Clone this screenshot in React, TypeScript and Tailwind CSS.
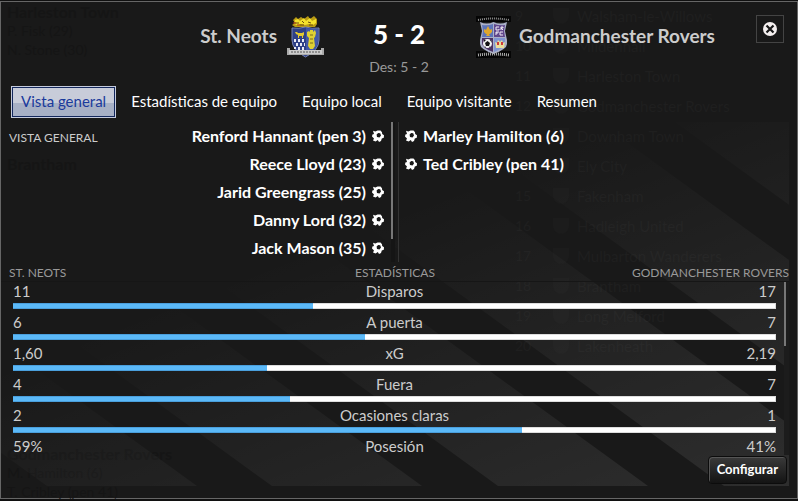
import React from 'react';
import clsx from 'clsx';

interface Goal {
  player: string;
  minute: string;
}

interface Stat {
  label: string;
  home: string;
  away: string;
  share: number;
}

const tabs = ['Vista general', 'Estadísticas de equipo', 'Equipo local', 'Equipo visitante', 'Resumen'];

const homeGoals: Goal[] = [
  { player: 'Renford Hannant', minute: 'pen 3' },
  { player: 'Reece Lloyd', minute: '23' },
  { player: 'Jarid Greengrass', minute: '25' },
  { player: 'Danny Lord', minute: '32' },
  { player: 'Jack Mason', minute: '35' },
];

const awayGoals: Goal[] = [
  { player: 'Marley Hamilton', minute: '6' },
  { player: 'Ted Cribley', minute: 'pen 41' },
];

const stats: Stat[] = [
  { label: 'Disparos', home: '11', away: '17', share: 39.3 },
  { label: 'A puerta', home: '6', away: '7', share: 46.1 },
  { label: 'xG', home: '1,60', away: '2,19', share: 33.3 },
  { label: 'Fuera', home: '4', away: '7', share: 36.3 },
  { label: 'Ocasiones claras', home: '2', away: '1', share: 66.7 },
];

const standings = [
  { pos: '9', team: 'Walsham-le-Willows' },
  { pos: '10', team: 'Mildenhall' },
  { pos: '11', team: 'Harleston Town' },
  { pos: '12', team: 'Godmanchester Rovers' },
  { pos: '', team: 'Downham Town' },
  { pos: '', team: 'Ely City' },
  { pos: '15', team: 'Fakenham' },
  { pos: '16', team: 'Hadleigh United' },
  { pos: '17', team: 'Mulbarton Wanderers' },
  { pos: '18', team: 'Brantham' },
  { pos: '19', team: 'Long Melford' },
  { pos: '20', team: 'Lakenheath' },
];

const BallIcon = () => (
  <svg viewBox="0 0 12 12" className="h-3 w-3 shrink-0" aria-hidden="true">
    <path
      fill="#fff"
      fillRule="evenodd"
      d="M1 .8 3.400 1.400 5.500.4 8.500.6 10 2.200 10.200 4 12 5.200 11.800 7.800 9.800 8.400 9 11 7 12 5.800 10 3.600 11.600 1 10.600 2 8.400 0 6.600.4 4.400 2 4ZM6.200 3 4.600 4.600 5 7 7.500 7.500 9 5.500 8.200 3.300Z"
    />
  </svg>
);

const HomeCrest = () => (
  <svg viewBox="0 0 37 42" className="h-[42px] w-[37px] shrink-0" role="img" aria-label="St. Neots">
    <path fill="#b99b14" d="M6 4 9 1l2 2 3-2 3 2 4-3 2 3 4-3 3 3v5l-2 3H8L5 9l3-2Z" />
    <path fill="#f4e22c" d="M8 4l3-1 2 2 4-3 2 3 4-3 2 3 4-2v4l-3 2-4-1-4 1-4-1-4 1-3-1Z" />
    <path stroke="#6d4d0d" strokeWidth="1" fill="none" d="M7 7h5m3-2 2 2m4-1 3 1m-11 2h4m5 0h4" />
    <path stroke="#b03a1c" strokeWidth="1" d="M6 7h3m1 2h3" />
    <path fill="#2f4187" stroke="#7784b4" strokeWidth="1" d="M5 12q7 1 13.500-1Q25 13 32 12v12q0 10-13.500 17Q5 34 5 24Z" />
    <path fill="#4258a8" d="M19 12q6 1 12 1v12q0 8-12 14Z" />
    <path fill="#e3c930" d="M8 16h2l1 1h4l2-1v3l-1 1v2h-1v-2h-3v2h-1v-3L9 18Z" />
    <g fill="#e9ebf5">
      <path d="M7 23h2v3H7zM11 23h2v3h-2zM15 23h2v3h-2zM9 27h2v3H9zM13 27h2v3h-2zM7 31h2v2H7zM11 31h2v3h-2zM15 31h2v3h-2zM17 27h1v3h-1z" />
    </g>
    <path fill="#dfd033" d="M23 14h3v2l2-2 1 3-1 4-1 1 1 8-2 3h-3l-2-3 1-8-2-2v-4l2-1 1 1Z" />
    <path stroke="#7b6a1c" strokeWidth="1" d="M23 19h3m-3 4h3m-3 4h3" />
    <path fill="#aaa" d="M0 32h3v2h31v-2h3v7H0Z" />
    <path fill="#ccc" d="M2 34h33v4H2z" />
    <path stroke="#555" strokeWidth="1" strokeDasharray="2 1" d="M4 36h29" />
  </svg>
);

const AwayCrest = () => (
  <svg viewBox="0 0 35 42" className="h-[42px] w-[35px] shrink-0" role="img" aria-label="Godmanchester Rovers">
    <path fill="#050505" d="M0 0h35v6H0zM0 35h35v7H0z" />
    <path stroke="#8f8f8f" strokeWidth="2" strokeDasharray="1 1" fill="none" d="M2 4q15-3 31 0" />
    <path fill="#aab0c8" d="M4 6q7 3 13.500 0Q24 9 31 6l-2 9 2 9v4q0 5-13.500 10Q4 33 4 28v-4l2-9Z" />
    <path fill="#5d74b8" d="M6 9q6 1 11-1v13H6l1-6Z" />
    <path fill="#60478c" d="M18 8q6 2 11 1l-1 6 1 6H18Z" />
    <path fill="#4b3263" d="M6 22h11v14q-11-4-11-9Z" />
    <path fill="#7f95d2" d="M18 22h11v5q0 5-11 9Z" />
    <path fill="#e0a72c" d="m12 10 2 4 2-1v3l-2 2h-1l1 2h-4l1-2h-1l-2-2v-3l2 1Z" />
    <path stroke="#f1eef7" strokeWidth="1" fill="none" d="M23 11h-3v3h3v-1m2 1v-3h2v1h-2l2 2M20 19v-3h3m-3 1h2m5-1h-3v3h3" />
    <circle cx="11.500" cy="27.500" r="4.500" fill="#f3f3f3" />
    <path fill="#111" d="m11.500 25 2.500 2-1 3h-3l-1-3ZM8 24h2l-2 2Zm6 0h1l1 3Zm-6 6 2 1v1Zm7 0-2 2v-1Z" />
    <path fill="#eadf9c" d="m19 26 2 1 1-3 2 2 2-2 1 3 2-1-1 6h-8Z" />
    <path fill="#cf3939" d="M21 26h2v3h-2zM25 26h2v3h-2z" />
    <path stroke="#b0b0b0" strokeWidth="3" strokeDasharray="1 1" fill="none" d="M2 39q15-2 31 0" />
  </svg>
);

// Page left open underneath the translucent panel
const Backdrop = () => (
  <div className="pointer-events-none absolute inset-0 select-none" aria-hidden="true">
    <div className="flex flex-col pl-1.5 text-sm leading-[19px] text-[#151515]">
      <div className="h-[152px]">
        <p className="text-base leading-[19px] font-bold">Harleston Town</p>
        <p>P. Fisk (29)</p>
        <p>N. Stone (30)</p>
      </div>
      <div className="h-[290px]">
        <p className="text-base leading-[19px] font-bold">Brantham</p>
      </div>
      <div>
        <p className="text-base leading-[19px] font-bold">Godmanchester Rovers</p>
        <p>M. Hamilton (6)</p>
        <p>T. Cribley (pen 41)</p>
      </div>
    </div>
    <ul className="absolute top-0 left-[514px] -mt-px text-[15px] text-[#1f1f1f]">
      {standings.map(({ pos, team }) => (
        <li key={team} className="flex h-[30px] items-center">
          <span className="w-[38px] text-sm">{pos}</span>
          <span className="mr-2 h-4 w-4 rounded-b-full bg-[#1c1c1c]" />
          {team}
        </li>
      ))}
    </ul>
  </div>
);

const Stripes = () => (
  <svg
    viewBox="0 0 788 364"
    preserveAspectRatio="xMaxYMax slice"
    className="pointer-events-none absolute inset-0 h-full w-full"
    aria-hidden="true"
  >
    <defs>
      <linearGradient id="stripe" gradientUnits="userSpaceOnUse" x1="640" y1="-9" x2="788" y2="364">
        <stop offset="0" stopColor="#fff" stopOpacity="0" />
        <stop offset="1" stopColor="#fff" stopOpacity="0.09" />
      </linearGradient>
    </defs>
    <g fill="url(#stripe)">
      <path d="M-456 0H-306L196 364H46Z" />
      <path d="M-230 0H-80L421 364H271Z" />
      <path d="M-4 0H146L647 364H497Z" />
      <path d="M222 0H372L873 364H723Z" />
      <path d="M448 0H598L1099 364H949Z" />
      <path d="M674 0H824L1325 364H1175Z" />
    </g>
  </svg>
);

const GoalList: React.FC<{ goals: Goal[]; side: 'home' | 'away' }> = ({ goals, side }) => (
  <ul className="text-base font-bold text-white">
    {goals.map(({ player, minute }) => (
      <li
        key={player}
        className={clsx('flex h-7 items-center gap-1.5', side === 'home' && 'flex-row-reverse')}
      >
        <BallIcon />
        <span>{`${player} (${minute})`}</span>
      </li>
    ))}
  </ul>
);

const StatLabels: React.FC<Omit<Stat, 'share'>> = ({ label, home, away }) => (
  <div className="grid grid-cols-[1fr_auto_1fr] text-[15px] leading-[18px] text-[#ccc]">
    <span>{home}</span>
    <span>{label}</span>
    <span className="text-right">{away}</span>
  </div>
);

const StatRow: React.FC<{ stat: Stat }> = ({ stat }) => (
  <li className="h-[31px]">
    <StatLabels label={stat.label} home={stat.home} away={stat.away} />
    <div className="mt-[3px] flex h-1.5 bg-white">
      <div className="border-y border-[#4a9fdc] bg-[#5bb9f8]" style={{ width: `${stat.share}%` }} />
      <div className="grow border-y border-r border-[#ddd]" />
    </div>
  </li>
);

const App = () => {
  const [activeTab, setActiveTab] = React.useState(tabs[0]);

  return (
    <div className="min-h-screen bg-[#101010] pt-px font-['Lato',sans-serif]">
      <main className="relative border border-[#666] bg-[#191919] pb-3">
        <Backdrop />

        <header className="relative grid h-[84px] grid-cols-[1fr_150px_1fr] pt-[11px]">
          <div className="flex h-12 items-center justify-end gap-2.5 text-[19px] font-bold text-[#ccc]">
            <h2 className="pb-0.5">St. Neots</h2>
            <HomeCrest />
          </div>
          <div className="text-center">
            <h1 className="h-11 text-[26px] leading-[42px] font-black text-white">5 - 2</h1>
            <p className="text-sm leading-5 text-[#999]">Des: 5 - 2</p>
          </div>
          <div className="flex h-12 items-center gap-2 pl-0.5 text-[19px] font-bold text-[#ccc]">
            <AwayCrest />
            <h2 className="pb-0.5">Godmanchester Rovers</h2>
          </div>
          <button
            aria-label="Cerrar"
            className="absolute top-[13px] right-[13px] flex h-7 w-7 items-center justify-center border border-[#444]"
          >
            <svg viewBox="0 0 14 14" className="h-3.5 w-3.5">
              <circle cx="7" cy="7" r="7" fill="#f5f0f0" />
              <path stroke="#191919" strokeWidth="2.200" d="m3.500 3.500 7 7m0-7-7 7" />
            </svg>
          </button>
        </header>

        <nav className="relative flex gap-[5px] px-2.5 text-[15px]">
          {tabs.map(tab => (
            <button
              key={tab}
              onClick={() => setActiveTab(tab)}
              className={clsx(
                'h-8 border px-[9px] pb-0.5',
                tab === activeTab
                  ? 'border-[#c5cbdc] bg-linear-to-b from-[#c8ccd9] from-55% to-[#a7b0c5] to-55% text-[#1a3a9c] inset-ring inset-ring-[#13275c]'
                  : 'border-transparent text-white'
              )}
            >
              {tab}
            </button>
          ))}
        </nav>

        <div className="relative mr-2">
          <Stripes />

          <section className="relative mt-1 grid h-[140px] grid-cols-2">
            <div className="relative flex justify-between pr-[11px] pl-2">
              <h3 className="pt-2 text-xs leading-4 text-[#ccc]">VISTA GENERAL</h3>
              <GoalList goals={homeGoals} side="home" />
              <div className="absolute top-0 right-0 h-full w-1 bg-[#151515]">
                <div className="h-[117px] w-0.5 bg-[#777]" />
              </div>
            </div>
            <div className="ml-[3px] border-l border-[#333] pl-1.5">
              <GoalList goals={awayGoals} side="away" />
            </div>
          </section>

          <section className="relative">
            <div className="grid h-5 grid-cols-[1fr_auto_1fr] items-center border-b border-[#161616] pt-0.5 text-xs text-[#999]">
              <h3 className="pl-2">ST. NEOTS</h3>
              <h3>ESTADÍSTICAS</h3>
              <h3 className="text-right">GODMANCHESTER ROVERS</h3>
            </div>
            <div className="flex">
              <ul className="grow pr-2 pl-3">
                {stats.map(stat => (
                  <StatRow key={stat.label} stat={stat} />
                ))}
                <li>
                  <StatLabels label="Posesión" home="59%" away="41%" />
                </li>
              </ul>
              <div className="w-[5px] bg-[#1c1c1c]">
                <div className="h-16 w-0.5 bg-[#777]" />
              </div>
            </div>
          </section>

          <div className="relative flex justify-end pt-px pr-0.5 pb-0.5">
            <button className="h-7 rounded-sm border border-[#0c0c0c] bg-linear-to-b from-[#3a3a3a] to-[#141414] px-2 text-[13px] font-bold text-white inset-shadow-[1px_1px_#555]">
              Configurar
            </button>
          </div>
        </div>
      </main>
    </div>
  );
};

export default App;
